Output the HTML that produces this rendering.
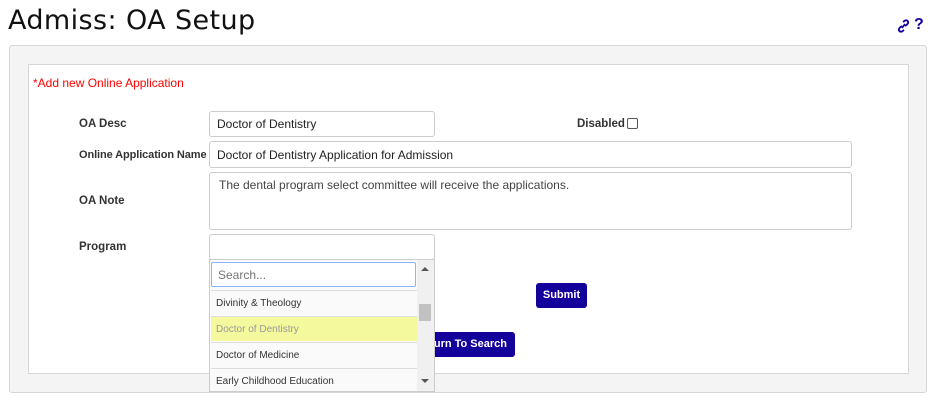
<!DOCTYPE html>
<html><head><style>
body{margin:0;width:936px;height:409px;background:#fff;font-family:"Liberation Sans",Arial,sans-serif;position:relative;overflow:hidden}
.a{position:absolute}
h1{position:absolute;left:8px;top:1px;margin:0;font-family:"DejaVu Sans","Liberation Sans",sans-serif;font-weight:normal;font-size:27px;letter-spacing:0.4px;color:#111;line-height:40px}
.lbl{position:absolute;font-size:11.5px;font-weight:bold;color:#333;white-space:nowrap}
.inp{position:absolute;border:1px solid #ccc;border-radius:3px;background:#fff;font-size:12px;color:#222;padding-left:7px;box-sizing:border-box;white-space:nowrap}
.btn{position:absolute;background:#14009b;color:#fff;font-weight:bold;font-size:11px;border-radius:3px;text-align:center;line-height:25px;white-space:nowrap}
.it{position:absolute;left:1px;width:206px;height:25px;font-size:10px;color:#333;line-height:25px;padding-left:5px;box-sizing:border-box;border-top:1px solid #ddd;background:#fafafa}
</style></head><body>
<h1>Admiss: OA Setup</h1>
<svg class="a" style="left:897px;top:19px" width="13" height="14" viewBox="0 0 13 14"><g fill="none" stroke="#14009b" stroke-width="1.8"><path d="M6 3 L8 1.5 Q10 0.8 11 2.5 Q11.6 4 10 5.5 L8 7"/><path d="M7 11 L5 12.5 Q3 13.2 2 11.5 Q1.4 10 3 8.5 L5 7"/><path d="M5 9 L8 5"/></g></svg>
<div class="a" style="left:914px;top:16px;font-size:16px;font-weight:bold;color:#14009b">?</div>
<div class="a" style="left:9px;top:45px;width:916px;height:346px;background:#f4f4f4;border:1px solid #d6d6d6;border-radius:3px"></div>
<div class="a" style="left:28px;top:64px;width:879px;height:308px;background:#fff;border:1px solid #d6d6d6"></div>
<div class="a" style="left:33px;top:76px;font-size:12px;color:#f00">*Add new Online Application</div>
<div class="lbl" style="left:79px;top:118px">OA Desc</div>
<div class="inp" style="left:209px;top:111px;width:226px;height:26px;line-height:24px">Doctor of Dentistry</div>
<div class="a" style="left:577px;top:118px;font-size:11.5px;font-weight:bold;color:#333">Disabled</div>
<div class="a" style="left:627px;top:118px;width:9px;height:9px;border:1px solid #555;border-radius:2px"></div>
<div class="lbl" style="left:79px;top:149px;font-size:11px;letter-spacing:-0.1px">Online Application Name</div>
<div class="inp" style="left:209px;top:141px;width:643px;height:27px;line-height:26px">Doctor of Dentistry Application for Admission</div>
<div class="lbl" style="left:79px;top:195px">OA Note</div>
<div class="inp" style="left:209px;top:172px;width:643px;height:58px;padding-top:5px;color:#444;padding-left:9px">The dental program select committee will receive the applications.</div>
<div class="lbl" style="left:79px;top:241px">Program</div>
<div class="inp" style="left:209px;top:234px;width:226px;height:26px"></div>
<div class="btn" style="left:536px;top:283px;width:51px;height:25px">Submit</div>
<div class="btn" style="left:400px;top:332px;width:115px;height:25px;text-align:right;padding-right:8px;box-sizing:border-box">Return To Search</div>
<div class="a" style="left:209px;top:259px;width:224px;height:131px;background:#fafafa;border:1px solid #ccc;overflow:hidden">
 <div class="a" style="left:1px;top:2px;width:205px;height:25px;border:1px solid #8ab4f8;border-radius:2px;background:#fff;font-size:12px;color:#777;line-height:25px;padding-left:6px;box-sizing:border-box">Search...</div>
 <div class="it" style="top:30px">Divinity &amp; Theology</div>
 <div class="it" style="top:56px;background:#f5f99e;color:#999">Doctor of Dentistry</div>
 <div class="it" style="top:82px">Doctor of Medicine</div>
 <div class="it" style="top:108px">Early Childhood Education</div>
 <div class="a" style="left:207px;top:0;width:17px;height:131px;background:#f0f0f0"></div>
 <div class="a" style="left:209px;top:44px;width:12px;height:17px;background:#c1c1c1"></div>
 <div class="a" style="left:211px;top:7px;width:0;height:0;border-left:4px solid transparent;border-right:4px solid transparent;border-bottom:4px solid #555"></div>
 <div class="a" style="left:211px;top:119px;width:0;height:0;border-left:4px solid transparent;border-right:4px solid transparent;border-top:4px solid #555"></div>
</div>
</body></html>
